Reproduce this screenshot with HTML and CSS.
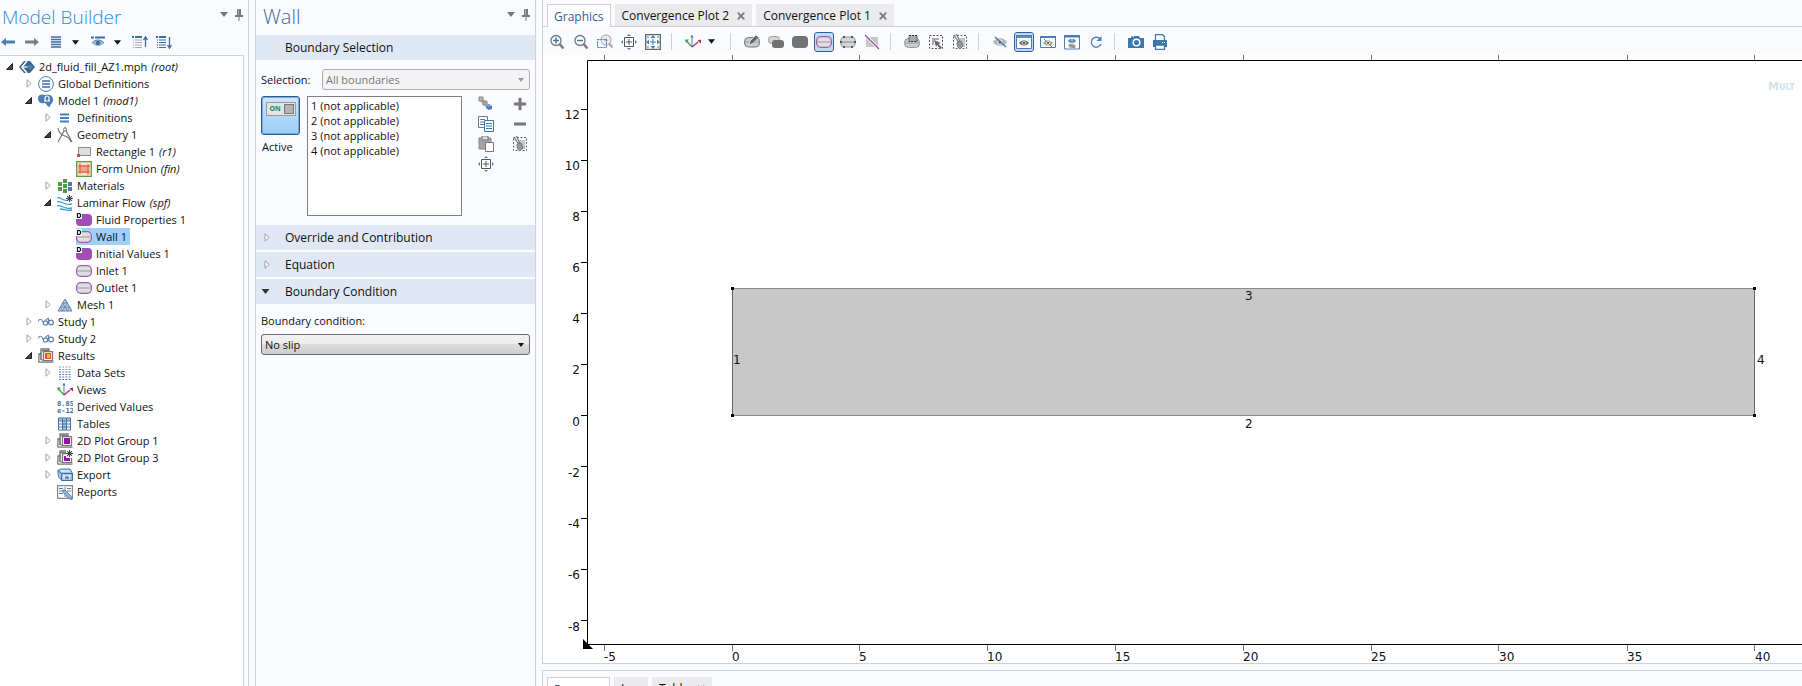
FILE: index.html
```html
<!DOCTYPE html>
<html lang="en">
<head>
<meta charset="utf-8">
<title>Model Builder</title>
<link rel="stylesheet" href="styles.css">
</head>
<body>
<svg class="sprite" aria-hidden="true">
  <symbol id="pin" viewBox="0 0 8 12"><path d="M2 0h4v6h2v2H0V6h2z" fill="#777"/><path d="M3 0h1v6H3z" fill="#aaa"/><path d="M3.500 8h1v4h-1z" fill="#777"/></symbol>
  <symbol id="caret" viewBox="0 0 8 5"><path d="M0 0h8L4 5z" fill="currentColor"/></symbol>
  <symbol id="open" viewBox="0 0 7 7"><path d="M6.500 .5v6h-6z" fill="#444" stroke="#222"/></symbol>
  <symbol id="closed" viewBox="0 0 7 9"><path d="M2 .8v7.400L6.200 4.500z" fill="#fff" stroke="#a0a0a0"/></symbol>
  <symbol id="axes" viewBox="0 0 16 16"><path d="M7 12.500V2" stroke="#4a86bd" fill="none"/><path d="M5.300 3.500 7 .5l1.700 3z" fill="#4a86bd"/><path d="M7 13 2 7.500" stroke="#3f9a4a" stroke-width="1.200"/><path d="M0 5.500h4L1 9z" fill="#3f9a4a"/><path d="m7 13 6-5" stroke="#b8215a" stroke-width="1.200"/><path d="M16 5.500v4l-3.500-3z" fill="#b8215a"/></symbol>
  <symbol id="domain" viewBox="0 0 16 16"><rect y="2" width="16" height="12" rx="4" fill="#a04db8"/><path d="M0 0h6v7H0z" fill="#fff"/><path d="M1.500 1.500h2l1 1v2l-1 1h-2z" fill="none" stroke="#111" stroke-width="1.200"/></symbol>
  <symbol id="boundary" viewBox="0 0 16 16"><rect x=".7" y="2.700" width="14.600" height="10.600" rx="4" fill="#dedede" stroke="#a05bb5" stroke-width="1.300"/><path d="M2 8h12" stroke="#999"/></symbol>
  <symbol id="study" viewBox="0 0 16 16"><path d="M.5 7.500C1 4 4 5 4.500 7.500L6 9M7 6.500c1.500-1 2.500-2.500 4-2" fill="none" stroke="#6c8fb8" stroke-width="1.200"/><circle cx="7.500" cy="9" r="2.200" fill="#fff" stroke="#5b83b1" stroke-width="1.200"/><circle cx="13" cy="8.500" r="2.400" fill="#fff" stroke="#5b83b1" stroke-width="1.200"/><path d="M10.500 10V5" stroke="#5b83b1" stroke-width="1.200"/></symbol>
  <symbol id="stack" viewBox="0 0 16 16"><path d="M.8 14.500 1 6h2M1 14.200h14.500M3 12V2.500h8V4M3 2.500V.8h8v2" fill="none" stroke="#777" stroke-width="1.300"/><path d="M5.500 3.700h9v9h-9z" fill="#fff" stroke="#777" stroke-width="1.300"/><path d="M3 4v8h2" fill="none" stroke="#777"/></symbol>
  <symbol id="star" viewBox="0 0 8 8"><path d="M4 0v8M0 4h8M1.200 1.200l5.600 5.600M6.800 1.200 1.200 6.800" stroke="#444" stroke-width="1.200"/></symbol>
  <symbol id="fit" viewBox="0 0 16 16"><path d="M3.500 3.500h9v9h-9z" fill="#fff" stroke="#555"/><path d="M8 5v6M5 8h6" stroke="#555"/><path d="m8 0 2 2H6zM8 16l2-2H6zM0 8l2-2v4zM16 8l-2-2v4z" fill="#4a7eb5"/></symbol>
  <symbol id="eye" viewBox="0 0 14 8"><path d="M0 4c3.500-5 10.500-5 14 0-3.500 5-10.500 5-14 0z" fill="currentColor"/><circle cx="7" cy="4" r="2.500" fill="#fff"/><circle cx="7" cy="4" r="1.500" fill="#333"/></symbol>
  <symbol id="brush" viewBox="0 0 16 16"><rect x="1.500" y="1.500" width="13" height="13" fill="none" stroke="#666" stroke-dasharray="2 1.500"/><path d="M7 4h6v9H9z" fill="#c4c4c4"/><path d="m2 1 5 8M4.500 0 8 8" stroke="#777" stroke-width="1.200"/><path d="M5 8.500 9 7l2 5-3 3c-2-1-3-3-3-6.500z" fill="#999" stroke="#777"/></symbol>
</svg>

<div class="app">
  <section class="panel builder">
    <header class="panel-head">
      <h1 class="title title-main">Model Builder</h1>
      <button class="plain" aria-label="Panel menu"><svg class="i-caret"><use href="#caret"/></svg></button>
      <button class="plain" aria-label="Pin panel"><svg class="i-pin"><use href="#pin"/></svg></button>
    </header>
    <div class="toolbar">
      <button class="tool" aria-label="Back"><svg viewBox="0 0 16 16"><path d="M1 8l5-4v2.500h9v3H6V12z" fill="#4a7eb5"/></svg></button>
      <button class="tool" aria-label="Forward"><svg viewBox="0 0 16 16"><path d="M15 8l-5-4v2.500H1v3h9V12z" fill="#7d7d7d"/></svg></button>
      <button class="tool" aria-label="List"><svg viewBox="0 0 16 16"><path d="M3 3h10M3 5.500h10M3 8h10M3 10.500h10M3 13h10" stroke="#3f6c9e" stroke-width="1.500"/></svg></button>
      <button class="tool drop" aria-label="List options"><svg><use href="#caret"/></svg></button>
      <button class="tool" aria-label="Show"><svg viewBox="0 0 16 16"><path d="M1 3.500h3m1 0h10" stroke="#3f6c9e" stroke-width="2"/><path d="M2 9c3-4 9-4 12 0-3 4-9 4-12 0z" fill="#9fb9d4"/><path d="M2 9c3-4 9-4 12 0" fill="none" stroke="#4a7eb5"/><circle cx="8" cy="9" r="2.200" fill="#3f6c9e"/></svg></button>
      <button class="tool drop" aria-label="Show options"><svg><use href="#caret"/></svg></button>
      <button class="tool" aria-label="Move up"><svg viewBox="0 0 16 16"><path d="M0 3h2m1 0h7" stroke="#3f6c9e" stroke-width="2"/><path d="M1 6h1m1 0h7M1 8.500h1m1 0h7M1 11h1m1 0h7M1 13.500h1m1 0h7" stroke="#aaa"/><path d="M13.500 13V4M11.500 6l2-3 2 3" fill="none" stroke="#3f6c9e" stroke-width="1.300"/></svg></button>
      <button class="tool" aria-label="Move down"><svg viewBox="0 0 16 16"><path d="M0 3h2m1 0h7" stroke="#3f6c9e" stroke-width="2"/><path d="M1 6h1m1 0h7M1 8.500h1m1 0h7M1 11h1m1 0h7M1 13.500h1m1 0h7" stroke="#3f6c9e"/><path d="M13.500 3v10M11.500 11l2 3 2-3" fill="none" stroke="#3f6c9e" stroke-width="1.300"/></svg></button>
    </div>
    <nav class="tree" aria-label="Model tree">
      <ul>
        <li><div class="row"><svg class="tw"><use href="#open"/></svg><span class="node"><svg class="ic" viewBox="0 0 16 16"><path d="M5 2h6l5 6-5 6H5L0 8z" fill="#3d648f"/><path d="M8 2 3 8l5 6" stroke="#fff" stroke-width="1.500" fill="none"/><path d="M3 8h6" stroke="#fff" stroke-width="1.200"/><path d="m11 5 3 3-3 3-3-3z" fill="#4a7eb5"/></svg>2d_fluid_fill_AZ1.mph <i>(root)</i></span></div>
        <ul>
          <li><div class="row"><svg class="tw"><use href="#closed"/></svg><span class="node"><svg class="ic" viewBox="0 0 16 16"><circle cx="8" cy="8" r="7.400" fill="#fff" stroke="#4a7eb5"/><path d="M4 5h8M4 8h8M4 11h8" stroke="#3f6ea5" stroke-width="1.700"/></svg>Global Definitions</span></div></li>
          <li><div class="row"><svg class="tw"><use href="#open"/></svg><span class="node"><svg class="ic" viewBox="0 0 16 16"><path d="M0 5c0-4 5-4 7-3 5-2 9 2 8 6-1 3-3 3-3 6-3 0-3-3-5-4-3 1-7 0-7-5z" fill="#4a7eb5"/><path d="M6 8h2c-2-2-1-5 1-5s3 3 1 5h2" fill="none" stroke="#fff" stroke-width="1.200"/></svg>Model 1 <i>(mod1)</i></span></div>
          <ul>
            <li><div class="row"><svg class="tw"><use href="#closed"/></svg><span class="node"><svg class="ic" viewBox="0 0 16 16"><path d="M3 4.500h9M3 8h9M3 11.500h9" stroke="#4a7eb5" stroke-width="2"/></svg>Definitions</span></div></li>
            <li><div class="row"><svg class="tw"><use href="#open"/></svg><span class="node"><svg class="ic" viewBox="0 0 16 16"><path d="M1 1c1 6 4 7 7 8s5 3 6 6M8 2 1 15M8 2l7 13M8 0v2" fill="none" stroke="#777" stroke-width="1.200"/><circle cx="8" cy="2.500" r="1.500" fill="#fff" stroke="#777"/></svg>Geometry 1</span></div>
            <ul>
              <li><div class="row"><span class="tw"></span><span class="node"><svg class="ic" viewBox="0 0 16 16"><path d="M2.500 3.500h12v8h-12z" fill="#dedede" stroke="#888"/><path d="M1 10h3v3H1z" fill="#c8553d"/></svg>Rectangle 1 <i>(r1)</i></span></div></li>
              <li><div class="row"><span class="tw"></span><span class="node"><svg class="ic" viewBox="0 0 16 16"><path d="M.7.700h14.600v14.600H.7z" fill="#fbe3c8" stroke="#5f9e4b" stroke-width="1.300"/><path d="M2.500 4h11v8h-11z" fill="#f3a08c"/><path d="M4 2v11M2 5h12M2 11h12M12 3v11" fill="none" stroke="#d8604a"/></svg>Form Union <i>(fin)</i></span></div></li>
            </ul></li>
            <li><div class="row"><svg class="tw"><use href="#closed"/></svg><span class="node"><svg class="ic" viewBox="0 0 16 16"><path d="M1 4h4v4H1zM1 9h4v4H1zM6 1h4v4H6zM6 6h4v4H6z" fill="#4f9e45"/><path d="M6 11h4v4H6z" fill="#4f9e45"/><path d="M11 9h4v4h-4zM11 4h4v4h-4z" fill="#4a7eb5"/></svg>Materials</span></div></li>
            <li><div class="row"><svg class="tw"><use href="#open"/></svg><span class="node"><svg class="ic" viewBox="0 0 16 16"><path d="M0 3c4-2 5 4 11 2M0 7c5-2 6 4 15 2M0 11c5-2 6 4 15 2M3 14c4 0 6 2 12 1" fill="none" stroke="#3f9fd0" stroke-width="1.300"/><use href="#star" x="9" width="7" height="7"/></svg>Laminar Flow <i>(spf)</i></span></div>
            <ul>
              <li><div class="row"><span class="tw"></span><span class="node"><svg class="ic"><use href="#domain"/></svg>Fluid Properties 1</span></div></li>
              <li><div class="row"><span class="tw"></span><span class="node selected"><svg class="ic" viewBox="0 0 16 16"><use href="#boundary"/><path d="M0 0h6v7H0z" fill="#fff"/><path d="M1.500 1.500h2l1 1v2l-1 1h-2z" fill="none" stroke="#111" stroke-width="1.200"/></svg>Wall 1</span></div></li>
              <li><div class="row"><span class="tw"></span><span class="node"><svg class="ic"><use href="#domain"/></svg>Initial Values 1</span></div></li>
              <li><div class="row"><span class="tw"></span><span class="node"><svg class="ic"><use href="#boundary"/></svg>Inlet 1</span></div></li>
              <li><div class="row"><span class="tw"></span><span class="node"><svg class="ic"><use href="#boundary"/></svg>Outlet 1</span></div></li>
            </ul></li>
            <li><div class="row"><svg class="tw"><use href="#closed"/></svg><span class="node"><svg class="ic" viewBox="0 0 16 16"><path d="M8 2 1 14h14z" fill="#b9cbdf" stroke="#5b83b1"/><path d="M5.500 6h5M3.500 10h9M5.500 6l5 8M10.500 6l-5 8M3.500 10l2 4M12.500 10l-2 4" fill="none" stroke="#5b83b1" stroke-width=".8"/></svg>Mesh 1</span></div></li>
          </ul></li>
          <li><div class="row"><svg class="tw"><use href="#closed"/></svg><span class="node"><svg class="ic"><use href="#study"/></svg>Study 1</span></div></li>
          <li><div class="row"><svg class="tw"><use href="#closed"/></svg><span class="node"><svg class="ic"><use href="#study"/></svg>Study 2</span></div></li>
          <li><div class="row"><svg class="tw"><use href="#open"/></svg><span class="node"><svg class="ic" viewBox="0 0 16 16"><use href="#stack"/><path d="M7 5h6v6H7z" fill="#e2552b"/><path d="M9 6h3v4H9z" fill="#f6b63c"/></svg>Results</span></div>
          <ul>
            <li><div class="row"><svg class="tw"><use href="#closed"/></svg><span class="node"><svg class="ic" viewBox="0 0 16 16"><path d="M2 2h12M2 4.500h12" stroke="#999" stroke-width="1.200" stroke-dasharray="2 1.200"/><path d="M2 7h12M2 9.500h12M2 12h12M2 14.500h12" stroke="#4a7eb5" stroke-width="1.200" stroke-dasharray="2 1.200"/></svg>Data Sets</span></div></li>
            <li><div class="row"><span class="tw"></span><span class="node"><svg class="ic"><use href="#axes"/></svg>Views</span></div></li>
            <li><div class="row"><span class="tw"></span><span class="node"><svg class="ic" viewBox="0 0 16 16"><text class="digits" x="0" y="7">8.85</text><text class="digits" x="0" y="14">e-12</text></svg>Derived Values</span></div></li>
            <li><div class="row"><span class="tw"></span><span class="node"><svg class="ic" viewBox="0 0 16 16"><path d="M1.500 2h12v12h-12z" fill="#fff"/><path d="M1.500 2h12v3h-12zM5.500 5h4v9h-4z" fill="#a8c4e0"/><path d="M1.500 2h12v12h-12zM1.500 5h12M1.500 8h12M1.500 11h12M5.500 2v12M9.500 2v12" fill="none" stroke="#4272a8"/></svg>Tables</span></div></li>
            <li><div class="row"><svg class="tw"><use href="#closed"/></svg><span class="node"><svg class="ic" viewBox="0 0 16 16"><use href="#stack"/><path d="M7 5h6v6H7z" fill="#9a0fae"/></svg>2D Plot Group 1</span></div></li>
            <li><div class="row"><svg class="tw"><use href="#closed"/></svg><span class="node"><svg class="ic" viewBox="0 0 16 16"><use href="#stack"/><path d="M7 6h6v5H7z" fill="#9a0fae"/><path d="M9 0h7v8H9z" fill="#fff"/><use href="#star" x="9" width="7" height="7"/></svg>2D Plot Group 3</span></div></li>
            <li><div class="row"><svg class="tw"><use href="#closed"/></svg><span class="node"><svg class="ic" viewBox="0 0 16 16"><path d="M.7 3.500 4 2h9l2.300 4v7.500H5L1.500 10z" fill="#a8c4e0" stroke="#4a7eb5"/><path d="M4.500 6.500h11v7h-11zM1 3.500l3.500 3" fill="none" stroke="#3f6ea5"/><path d="M6 9h8M4 4h9M7 12V9m5 3V9" stroke="#fff"/><path d="M8 9.500h4v2H8z" fill="#4a7eb5"/></svg>Export</span></div></li>
            <li><div class="row"><span class="tw"></span><span class="node"><svg class="ic" viewBox="0 0 16 16"><path d="M.6 1.600h14.800v12.800H.6z" fill="#fff" stroke="#888" stroke-width="1.200"/><path d="M2 4.500h4M2 7h4M2 9.500h4M10 4.500h4M10 7h4" stroke="#4a7eb5"/><path d="M8 3v10" stroke="#888"/><path d="m6 6 2 0 6 6 1 4-4-2-5-6z" fill="#8fb2d6" stroke="#4a7eb5" stroke-width=".8"/></svg>Reports</span></div></li>
          </ul></li>
        </ul></li>
      </ul>
    </nav>
  </section>

  <section class="panel settings">
    <header class="panel-head">
      <h2 class="title title-sub">Wall</h2>
      <button class="plain" aria-label="Panel menu"><svg class="i-caret"><use href="#caret"/></svg></button>
      <button class="plain" aria-label="Pin panel"><svg class="i-pin"><use href="#pin"/></svg></button>
    </header>
    <h3 class="bar">Boundary Selection</h3>
    <div class="selection">
      <div class="field">
        <label for="sel">Selection:</label>
        <span class="combo combo-off"><select id="sel" disabled><option>All boundaries</option></select></span>
      </div>
      <div class="pick">
        <div class="active">
          <button class="toggle" id="active" aria-pressed="true"><span class="switch">ON<span class="knob"></span></span></button>
          <label for="active">Active</label>
        </div>
        <select class="list" multiple size="4" aria-label="Boundaries">
          <option>1 (not applicable)</option><option>2 (not applicable)</option><option>3 (not applicable)</option><option>4 (not applicable)</option>
        </select>
        <div class="acts">
          <button class="act" aria-label="Create selection"><svg viewBox="0 0 16 16"><path d="M1 1h4v4H1zM5 5h4v4H5z" fill="#bbb" stroke="#888"/><path d="m4 3 5 5M3 5l5 5" stroke="#999" stroke-width="1.500"/><path d="m8 9 3-1 3 2v3l-3 1-3-2z" fill="#4a7eb5"/><path d="m8 9 3 1 3-1" stroke="#9fc0e0" fill="none"/></svg></button>
          <button class="act" aria-label="Add"><svg viewBox="0 0 16 16"><path d="M8 2v12M2 8h12" stroke="#777" stroke-width="3"/></svg></button>
          <button class="act" aria-label="Copy"><svg viewBox="0 0 16 16"><path d="M.5.500h9v11h-9z" fill="#fff" stroke="#777"/><path d="M2 3.500h5M2 6h5M2 8.500h4" stroke="#777"/><path d="M6.500 4.500h9v11h-9z" fill="#fff" stroke="#3f77ad"/><path d="M8 7.500h6M8 10h6M8 12.500h6" stroke="#3f77ad"/></svg></button>
          <button class="act" aria-label="Remove"><svg viewBox="0 0 16 16"><path d="M2 8h12" stroke="#777" stroke-width="3"/></svg></button>
          <button class="act" aria-label="Paste"><svg viewBox="0 0 16 16"><path d="M1 2h12v11H1z" fill="#a5a5a5" stroke="#888"/><path d="M4 0h6v4H4z" fill="#ddd" stroke="#777"/><path d="M7.500 6.500h8v9h-8z" fill="#fff" stroke="#777"/></svg></button>
          <button class="act" aria-label="Clear selection"><svg><use href="#brush"/></svg></button>
          <button class="act" aria-label="Zoom to selection"><svg><use href="#fit"/></svg></button>
        </div>
      </div>
    </div>
    <div class="bars">
      <h3 class="bar"><svg class="tw"><use href="#closed"/></svg>Override and Contribution</h3>
      <h3 class="bar"><svg class="tw"><use href="#closed"/></svg>Equation</h3>
      <h3 class="bar"><svg class="down"><use href="#caret"/></svg>Boundary Condition</h3>
    </div>
    <div class="condition">
      <label for="bc">Boundary condition:</label>
      <span class="combo"><select id="bc"><option>No slip</option></select></span>
    </div>
  </section>

  <main class="work">
    <section class="graphics">
      <div class="tabs">
        <button class="tab tab-on">Graphics</button>
        <button class="tab">Convergence Plot 2 <svg class="x" viewBox="0 0 8 8"><path d="m.7.700 6.600 6.600m0-6.600L.7 7.300" stroke="#777" stroke-width="1.700"/></svg></button>
        <button class="tab">Convergence Plot 1 <svg class="x" viewBox="0 0 8 8"><path d="m.7.700 6.600 6.600m0-6.600L.7 7.300" stroke="#777" stroke-width="1.700"/></svg></button>
      </div>
      <div class="gbar">
        <button class="g" aria-label="Zoom in"><svg viewBox="0 0 16 16"><circle cx="7" cy="6.500" r="5" fill="#fff" stroke="#777" stroke-width="1.300"/><path d="m10.500 10 4 4.500" stroke="#777" stroke-width="2.500"/><path d="M4 6.500h6M7 3.500v6" stroke="#3f77ad" stroke-width="1.500"/></svg></button>
        <button class="g" aria-label="Zoom out"><svg viewBox="0 0 16 16"><circle cx="7" cy="6.500" r="5" fill="#fff" stroke="#777" stroke-width="1.300"/><path d="m10.500 10 4 4.500" stroke="#777" stroke-width="2.500"/><path d="M4 6.500h6" stroke="#3f77ad" stroke-width="1.500"/></svg></button>
        <button class="g" aria-label="Zoom box"><svg viewBox="0 0 16 16"><circle cx="9" cy="6" r="5" fill="#f0f0f0" stroke="#bbb" stroke-width="1.300"/><path d="m12 9.500 3.500 4" stroke="#aaa" stroke-width="2.500"/><path d="M6.500 6h5M9 3.500v5" stroke="#9bb8d6"/><path d="M.5 5.500h9v8h-9z" fill="none" stroke="#3f77ad" stroke-dasharray="2 1"/></svg></button>
        <button class="g" aria-label="Zoom selected"><svg><use href="#fit"/></svg></button>
        <button class="g" aria-label="Zoom extents"><svg viewBox="0 0 16 16"><path d="M.7.700h14.600v14.600H.7z" fill="#fff" stroke="#666" stroke-width="1.300"/><path d="M8 5v6M5 8h6" stroke="#3f77ad"/><path d="m8 1 2.500 3h-5zM8 15l2.500-3h-5zM1 8l3-2.500v5zM15 8l-3-2.500v5z" fill="#4a7eb5"/><path d="M2 2h2v2H2zM12 2h2v2h-2zM2 12h2v2H2zM12 12h2v2h-2z" fill="#9fbfde"/></svg></button>
        <span class="sep"></span>
        <button class="g" aria-label="View orientation"><svg><use href="#axes"/></svg></button>
        <button class="g gdrop" aria-label="View options"><svg><use href="#caret"/></svg></button>
        <span class="sep"></span>
        <button class="g" aria-label="Select objects"><svg viewBox="0 0 16 16"><rect x=".5" y="3.500" width="15" height="9.500" rx="4" fill="#ccc" stroke="#777"/><path d="M1 8h14" stroke="#999"/><path d="m5 11 1-4 6-6 3 2.500-6 6z" fill="#666" stroke="#eee" stroke-width=".8"/></svg></button>
        <button class="g" aria-label="Select domains"><svg viewBox="0 0 16 16"><rect x=".5" y="2.500" width="11" height="7" rx="3" fill="#d5d5d5" stroke="#999"/><rect x="4" y="6" width="12" height="8" rx="3" fill="#727272"/></svg></button>
        <button class="g" aria-label="Domain level"><svg viewBox="0 0 16 16"><rect y="2" width="16" height="12" rx="4" fill="#727272"/></svg></button>
        <button class="g g-on" aria-label="Select boundaries"><svg><use href="#boundary"/></svg></button>
        <button class="g" aria-label="Select points"><svg viewBox="0 0 16 16"><rect x=".6" y="3" width="14.800" height="10" rx="4" fill="#d5d5d5" stroke="#999"/><path d="M1 8h14" stroke="#888"/><path d="M3 2h2v2H3zM11 2h2v2h-2zM3 12h2v2H3zM11 12h2v2h-2zM0 7h2v2H0zM14 7h2v2h-2z" fill="#555"/></svg></button>
        <button class="g" aria-label="Deselect"><svg viewBox="0 0 16 16"><path d="M2 3h12v10H2z" fill="#c6c6c6"/><path d="m1 1 14 14" stroke="#fff" stroke-width="3"/><path d="m1 1 14 14" stroke="#9b45ad" stroke-width="1.200"/></svg></button>
        <span class="sep"></span>
        <button class="g" aria-label="Box select"><svg viewBox="0 0 16 16"><rect x=".5" y="4.500" width="15" height="9" rx="4" fill="#ccc" stroke="#999"/><path d="M1 9h14" stroke="#999"/><path d="M5 1.500h8v6H5z" fill="#aaa" stroke="#333" stroke-dasharray="2 1"/></svg></button>
        <button class="g" aria-label="Select box"><svg viewBox="0 0 16 16"><path d="M1.500 1.500h13v13h-13z" fill="none" stroke="#555" stroke-dasharray="2 1.500"/><path d="M4 4h7v2H6v5H4z" fill="#aaa"/><path d="m6 6 7 3-2.500 1L14 13.500 12.500 15 9 11l-1 2z" fill="#666"/></svg></button>
        <button class="g" aria-label="Deselect box"><svg><use href="#brush"/></svg></button>
        <span class="sep"></span>
        <button class="g" aria-label="Hide"><svg viewBox="0 0 16 16" color="#b5b5b5"><use href="#eye" x="1" y="4" width="14" height="8"/><path d="m3 3 11 10" stroke="#4a7eb5" stroke-width="1.500"/></svg></button>
        <button class="g g-on" aria-label="Show only"><svg viewBox="0 0 16 16" color="#777"><path d="M0 1h16v14H0z" fill="#fff"/><path d="M0 1h16v3H0z" fill="#5b8fc4"/><path d="M.5 1.500h15v13H.5z" fill="none" stroke="#4a7eb5"/><use href="#eye" x="3" y="6" width="10" height="6"/></svg></button>
        <button class="g" aria-label="Show hidden"><svg viewBox="0 0 16 16" color="#aaa"><path d="M.5 2.500h15v11H.5z" fill="#fff" stroke="#4a7eb5"/><path d="M0 2h16v2H0z" fill="#4a7eb5"/><use href="#eye" x="3" y="6" width="10" height="6"/><path d="m4 5 8 8" stroke="#777"/></svg></button>
        <button class="g" aria-label="Show all"><svg viewBox="0 0 16 16" color="#4a7eb5"><path d="M.5 1.500h15v13.500H.5z" fill="#fff" stroke="#4a7eb5"/><path d="M0 1h16v2.500H0z" fill="#4a7eb5"/><use href="#eye" x="4" y="4.500" width="8" height="5"/><path d="M4 12c2-3 6-3 8 0-2 3-6 3-8 0z" fill="#aaa"/><path d="m5 10 6 4" stroke="#777"/></svg></button>
        <button class="g" aria-label="Reset"><svg viewBox="0 0 16 16"><path d="M12.500 5.500a5 5 0 1 0 .5 4.500" fill="none" stroke="#4a7eb5" stroke-width="1.300"/><path d="M13.500 2v5h-5z" fill="#4a7eb5"/></svg></button>
        <span class="sep"></span>
        <button class="g" aria-label="Snapshot"><svg viewBox="0 0 16 16"><path d="M0 4h3V2.500h2V4l1-2h5l1 2h4v10H0z" fill="#3f77ad"/><circle cx="8.500" cy="8.500" r="3.300" fill="#3f77ad" stroke="#fff" stroke-width="1.500"/></svg></button>
        <button class="g" aria-label="Print"><svg viewBox="0 0 16 16"><path d="M3.500 6V.700h7l2 2V6" fill="#fff" stroke="#3f77ad" stroke-width="1.300"/><path d="M1 6h14v7H1z" fill="#3f77ad"/><path d="M3.500 11h9v4.300h-9z" fill="#fff" stroke="#3f77ad" stroke-width="1.300"/><path d="M10 8.500h1m1 0h1" stroke="#fff"/></svg></button>
      </div>
      <div class="canvas">
        <svg class="plot" viewBox="0 0 1259 608" preserveAspectRatio="xMinYMin slice" role="img" aria-label="Geometry plot">
          <rect x="189" y="233" width="1022" height="128" fill="#c8c8c8"/>
          <path d="M189 233.500h1023M189 360.500h1023" stroke="#8c8c8c"/>
          <path d="M189.500 233v128M1211.500 233v128" stroke="#666"/>
          <path d="M188 232h3v3h-3zM1210 232h3v3h-3zM188 359h3v3h-3zM1210 359h3v3h-3z"/>
          <path d="M61.500 0v5M189.500 0v5M316.500 0v5M444.500 0v5M572.500 0v5M700.500 0v5M828.500 0v5M955.500 0v5M1084.500 0v5M1211.500 0v5M61.500 590v6M189.500 590v6M316.500 590v6M444.500 590v6M572.500 590v6M700.500 590v6M828.500 590v6M955.500 590v6M1084.500 590v6M1211.500 590v6" stroke="#777"/>
          <path d="M1259 5.500H44.500v584H1259M38 54.500h6M38 105.500h6M38 156.500h6M38 207.500h6M38 258.500h6M38 309.500h6M38 360.500h6M38 411.500h6M38 463.500h6M38 514.500h6M38 565.500h6" fill="none" stroke="#000"/>
          <path d="M40 584v10h10z"/>
          <g class="tick tick-y">
            <text x="37" y="64">12</text><text x="37" y="115">10</text><text x="37" y="166">8</text><text x="37" y="217">6</text><text x="37" y="268">4</text><text x="37" y="319">2</text><text x="37" y="371">0</text><text x="37" y="422">-2</text><text x="37" y="473">-4</text><text x="37" y="524">-6</text><text x="37" y="576">-8</text>
          </g>
          <g class="tick">
            <text x="61" y="606">-5</text><text x="189" y="606">0</text><text x="316" y="606">5</text><text x="444" y="606">10</text><text x="572" y="606">15</text><text x="700" y="606">20</text><text x="828" y="606">25</text><text x="956" y="606">30</text><text x="1084" y="606">35</text><text x="1212" y="606">40</text>
            <text x="190" y="309">1</text><text x="702" y="373">2</text><text x="702" y="245">3</text><text x="1214" y="309">4</text>
          </g>
          <text class="mark" x="1225" y="35">Mult</text>
        </svg>
      </div>
    </section>
    <section class="messages">
      <div class="tabs">
        <button class="tab tab-on">Progress</button>
        <button class="tab">Log</button>
        <button class="tab">Table <svg class="x" viewBox="0 0 8 8"><path d="m.7.700 6.600 6.600m0-6.600L.7 7.300" stroke="#aaa" stroke-width="1.700"/></svg></button>
      </div>
    </section>
  </main>
</div>
</body>
</html>
```
FILE: styles.css
```css
* { box-sizing: border-box; }
html, body { height: 100%; margin: 0; }
body { background: #fafbff; color: #111; font: 11px/17px "Open Sans", "Noto Sans", sans-serif; overflow: hidden; }
button, select { font: inherit; color: inherit; }
button { padding: 0; border: 0; background: none; }
svg { display: block; }
h1, h2, h3, ul { margin: 0; padding: 0; font-weight: 400; }
.sprite { display: none; }

.app { display: flex; gap: 6px; height: 100vh; }
.panel { display: flex; flex-direction: column; flex: none; border-right: 1px solid #cfd0d8; }
.builder { width: 249px; }
.settings { width: 281px; border-left: 1px solid #cfd0d8; }

.panel-head { display: flex; align-items: center; gap: 7px; height: 35px; padding: 0 5px 6px 2px; }
.settings .panel-head { padding-left: 7px; }
.title { flex: 1; font-weight: 300; line-height: 28px; padding-top: 4px; }
.title-main { font-size: 19px; color: #2b8fd6; }
.title-sub { font-size: 20px; color: #3f68a3; }
.plain { color: #777; }
.i-caret { width: 8px; height: 5px; }
.i-pin { width: 8px; height: 12px; }

.toolbar { display: flex; gap: 8px; height: 20px; padding-bottom: 6px; align-items: center; }
.tool svg { width: 16px; height: 16px; }
.drop { width: 10px; }
.drop svg { width: 7px; height: 5px; }

.tree { flex: 1; margin-right: 4px; padding: 2px 0 0 6px; border: 1px solid #cfd0d8; border-left: 0; border-bottom: 0; background: #fff; overflow: hidden; }
.tree ul { list-style: none; }
.tree ul ul { padding-left: 19px; }
.row { display: flex; align-items: center; height: 17px; white-space: nowrap; }
.tw { flex: none; width: 7px; height: 9px; }
.row .tw { margin-right: 6px; }
.node { display: flex; align-items: center; gap: 4px; height: 17px; padding-right: 3px; }
.selected { background: #9fd0f9; }
.ic { flex: none; width: 16px; height: 16px; }
.digits { font: bold 7px "DejaVu Sans Mono", monospace; fill: #3f6ea5; }

.bar { display: flex; align-items: center; height: 25px; padding-left: 7px; background: #dfe8f4; font-size: 12px; }
.bar:not(:has(svg)) { padding-left: 29px; }
.bar svg { flex: none; margin-right: 15px; }
.bar .down { width: 9px; height: 5px; margin-left: -2px; color: #333; }
.bars { display: grid; gap: 2px; }
.selection { display: grid; gap: 6px; padding: 9px 5px 9px 5px; }
.field { display: flex; align-items: center; justify-content: space-between; }
.field .combo { width: 208px; }
.combo { position: relative; display: block; height: 21px; }
.combo select { appearance: none; width: 100%; height: 100%; padding: 0 3px; border: 1px solid #6c6c6c; border-radius: 3px; background: linear-gradient(#f3f3f3, #ebebeb 50%, #dcdcdc 50%, #cdcdcd); }
.combo::after { content: ""; position: absolute; right: 6px; top: 9px; border: 3px solid transparent; border-top: 4px solid #111; border-bottom: 0; pointer-events: none; }
.combo-off select { border-color: #b0b0b0; background: #f4f4f4; color: #777; opacity: 1; }
.combo-off::after { border-top-color: #999; }
.pick { display: flex; }
.active { display: grid; justify-items: center; align-content: start; gap: 3px; width: 39px; margin-right: 7px; }
.active label { justify-self: start; padding-left: 1px; }
.toggle { display: flex; justify-content: center; width: 39px; height: 39px; padding-top: 5px; border: 1px solid #2c5a94; border-radius: 3px; background: linear-gradient(#cfe6fb, #9bcdf7); box-shadow: inset 0 0 0 1px #7ba9d8; }
.switch { display: flex; align-items: center; justify-content: space-between; width: 30px; height: 14px; padding: 0 1px 0 3px; border: 1px solid #999; background: #e4e4e4; color: #2b8a3e; font: bold 7px/12px "Open Sans", sans-serif; }
.knob { width: 10px; height: 10px; border: 1px solid #777; background: #b2b2b2; }
.list { width: 155px; height: 120px; padding: 1px 0; border: 1px solid #7b7d88; border-radius: 0; background: #fff; overflow: hidden; }
.list option { height: 15px; min-height: 0; padding: 0 3px; line-height: 15px; }
.acts { display: grid; grid-template-columns: 16px 16px; grid-auto-rows: 16px; gap: 4px 18px; padding-left: 16px; }
.act svg { width: 16px; height: 16px; }
.condition { display: grid; gap: 5px; padding: 8px 5px 0 5px; }

.work { display: flex; flex-direction: column; gap: 6px; flex: 1; min-width: 0; }
.graphics { display: flex; flex-direction: column; flex: 1; min-height: 0; border-left: 1px solid #cfd0d8; border-bottom: 1px solid #cfd0d8; }
.tabs { display: flex; flex: none; align-items: end; gap: 4px; height: 27px; padding: 4px 0 0 4px; border-bottom: 1px solid #cfd0d8; font-size: 12px; }
.tab { display: flex; align-items: center; gap: 8px; height: 22px; padding: 0 7px; background: #ebebeb; white-space: nowrap; }
.tab-on { height: 23px; margin-bottom: -1px; padding: 0 6px; border: 1px solid #cfd0d8; border-bottom: 0; background: #fff; color: #2f5d9b; }
.x { width: 8px; height: 8px; margin-top: 2px; }
.gbar { display: flex; flex: none; align-items: center; gap: 6px; height: 28px; padding: 1px 0 0 5px; }
.g { display: grid; place-items: center; flex: none; width: 18px; height: 18px; }
.g svg { width: 16px; height: 16px; }
.g-on { outline: 1px solid #2f5f9f; background: #c2daf5; border-radius: 2px; }
.gdrop { width: 13px; justify-items: start; }
.gdrop svg { width: 7px; height: 5px; }
.sep { flex: none; width: 10px; height: 17px; padding-left: 3px; }
.sep::before { content: ""; display: block; width: 1px; height: 100%; background: #cfd0d8; }
.canvas { flex: 1; min-height: 0; background: #fff; }
.plot { width: 100%; height: 100%; }
.tick { font: 12px "DejaVu Sans", sans-serif; fill: #111; }
.tick-y { text-anchor: end; }
.mark { font: small-caps bold 11px "DejaVu Sans", sans-serif; fill: #cfe2ee; }
.messages { height: 16px; border-left: 1px solid #cfd0d8; border-top: 1px solid #cfd0d8; overflow: hidden; }
.messages .tabs { height: 29px; padding-top: 6px; }
```
